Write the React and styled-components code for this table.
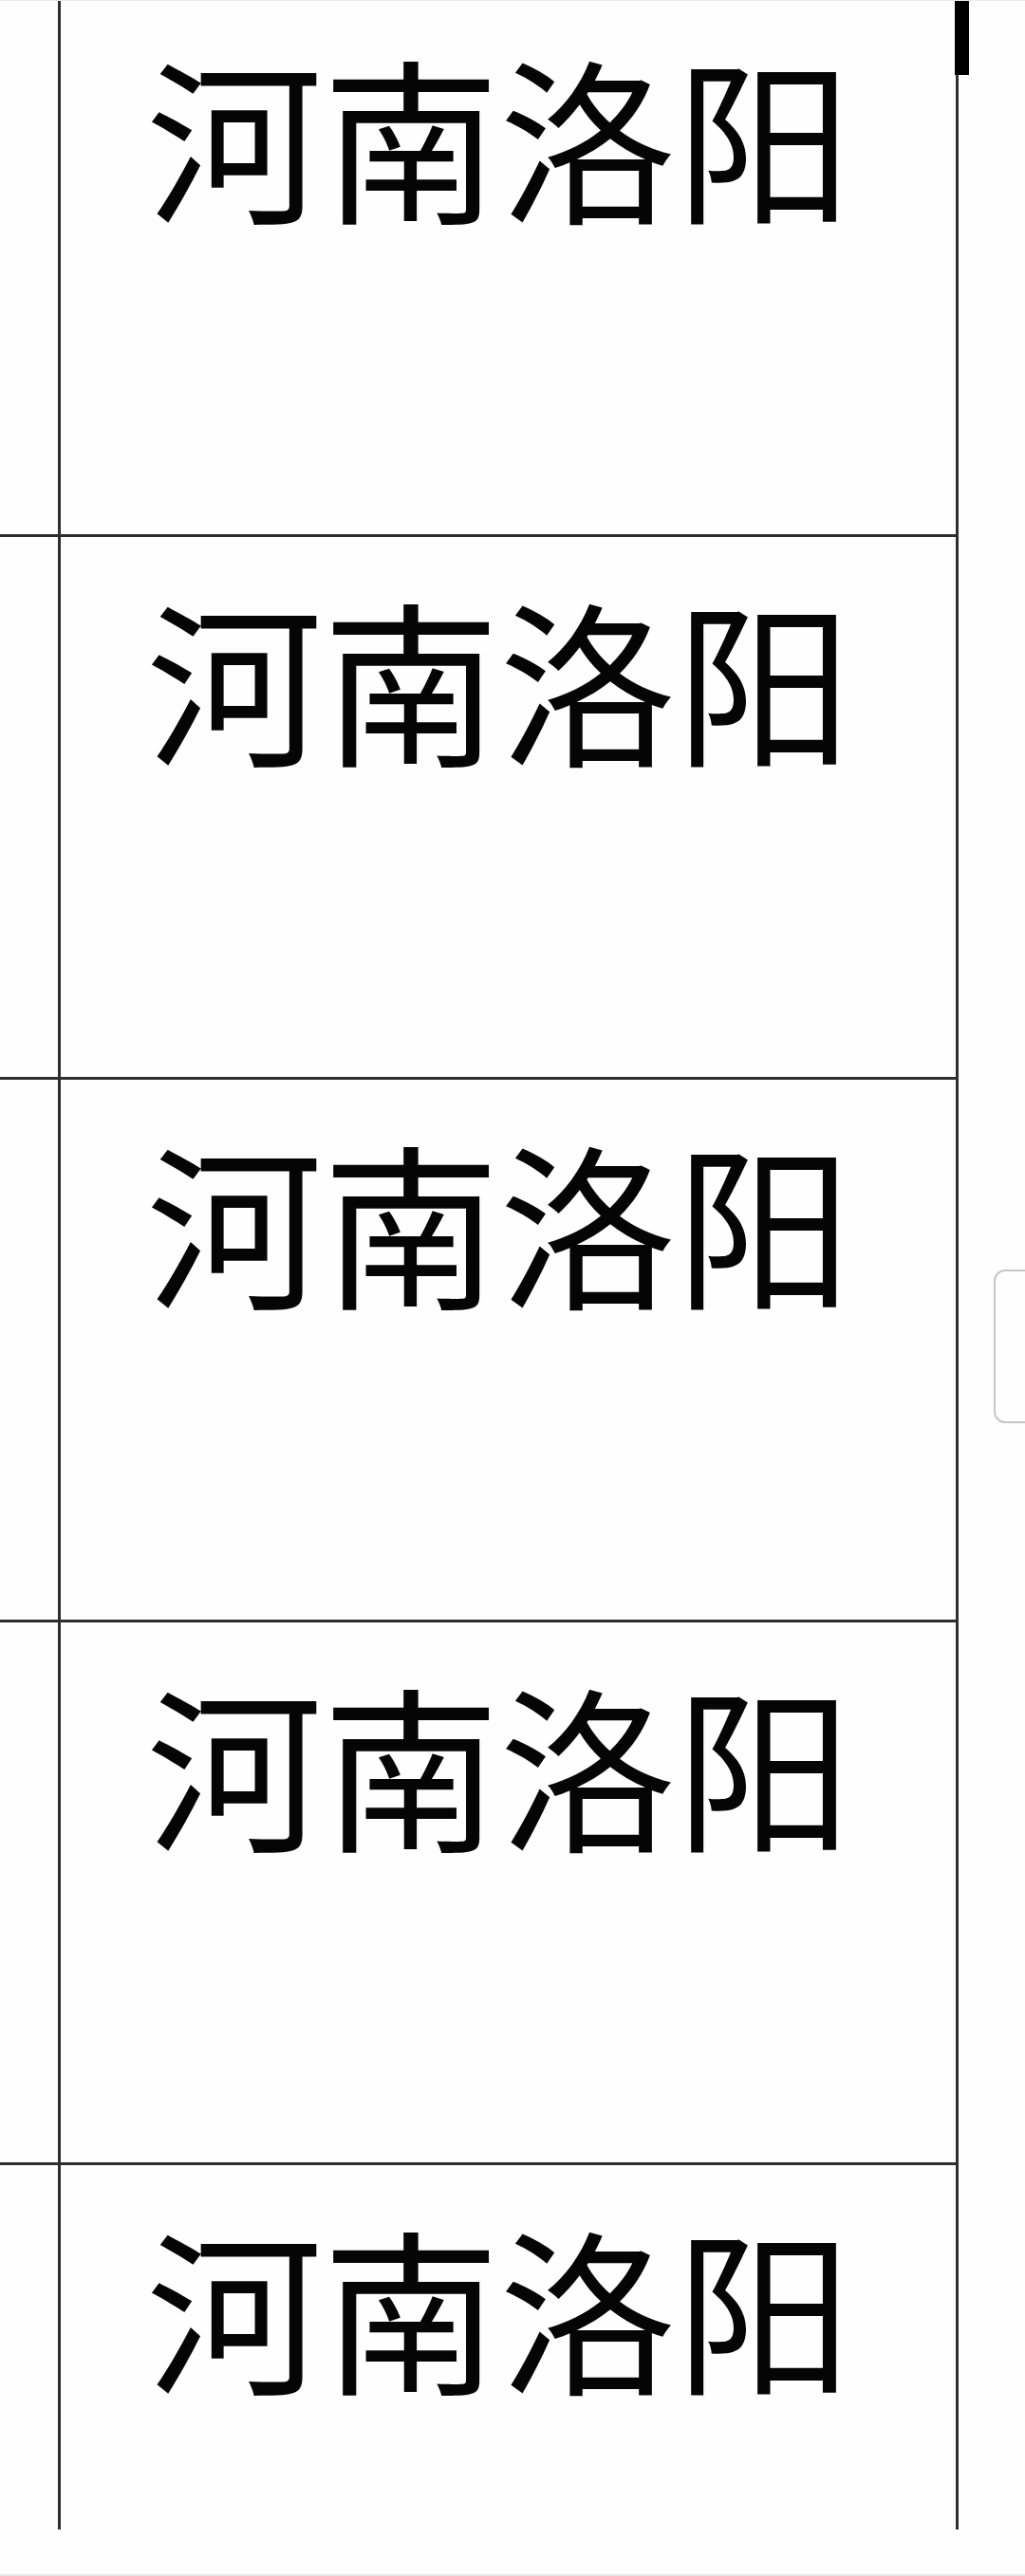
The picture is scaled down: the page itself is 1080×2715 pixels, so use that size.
import React from 'react'
import styled, { createGlobalStyle } from 'styled-components'

const GlobalStyle = createGlobalStyle`
  html, body {
    margin: 0;
    padding: 0;
    background: #fefefe;
  }
`

const Viewport = styled.div`
  position: relative;
  width: 1080px;
  height: 2715px;
  overflow: hidden;
  display: flex;
  flex-direction: column;
  border-top: 1px solid #ececec;
  box-sizing: border-box;
  background: #fefefe;
`

const Sheet = styled.div`
  margin-top: -7px;
  display: grid;
  grid-template-columns: 64px 946px;
  grid-auto-rows: 572px;
  width: 1010px;
  height: 2672px;
`

const Cell = styled.div`
  box-sizing: border-box;
  border-right: 3px solid #2e2e2e;
  border-bottom: ${p => (p.last ? 'none' : '3px solid #2e2e2e')};
  height: ${p => (p.last ? '384px' : '572px')};
`

const NameCell = styled(Cell)`
  padding: 54px 0 0 90px;
  font-family: "Noto Sans CJK SC", "Noto Sans CJK TC", sans-serif;
  font-size: 186px;
  line-height: 1;
  color: #050505;
  white-space: nowrap;
`

const Filler = styled.div`
  flex: 1;
`

const BottomEdge = styled.div`
  height: 2px;
  background: #e8e8e8;
`

const Caret = styled.span`
  position: absolute;
  left: 1006px;
  top: 0;
  width: 15px;
  height: 78px;
  background: #000;
`

const SideHandle = styled.span`
  position: absolute;
  left: 1047px;
  top: 1337px;
  width: 60px;
  height: 158px;
  border: 2px solid #c6c6c6;
  border-radius: 12px;
`

const rows = ['河南洛阳', '河南洛阳', '河南洛阳', '河南洛阳', '河南洛阳']

export default function App() {
  return (
    <>
      <GlobalStyle />
      <Viewport>
        <Sheet>
          {rows.map((name, i) => {
            const last = i === rows.length - 1
            return (
              <React.Fragment key={i}>
                <Cell last={last} />
                <NameCell last={last}>{name}</NameCell>
              </React.Fragment>
            )
          })}
        </Sheet>
        <Filler />
        <BottomEdge />
        <Caret />
        <SideHandle />
      </Viewport>
    </>
  )
}
